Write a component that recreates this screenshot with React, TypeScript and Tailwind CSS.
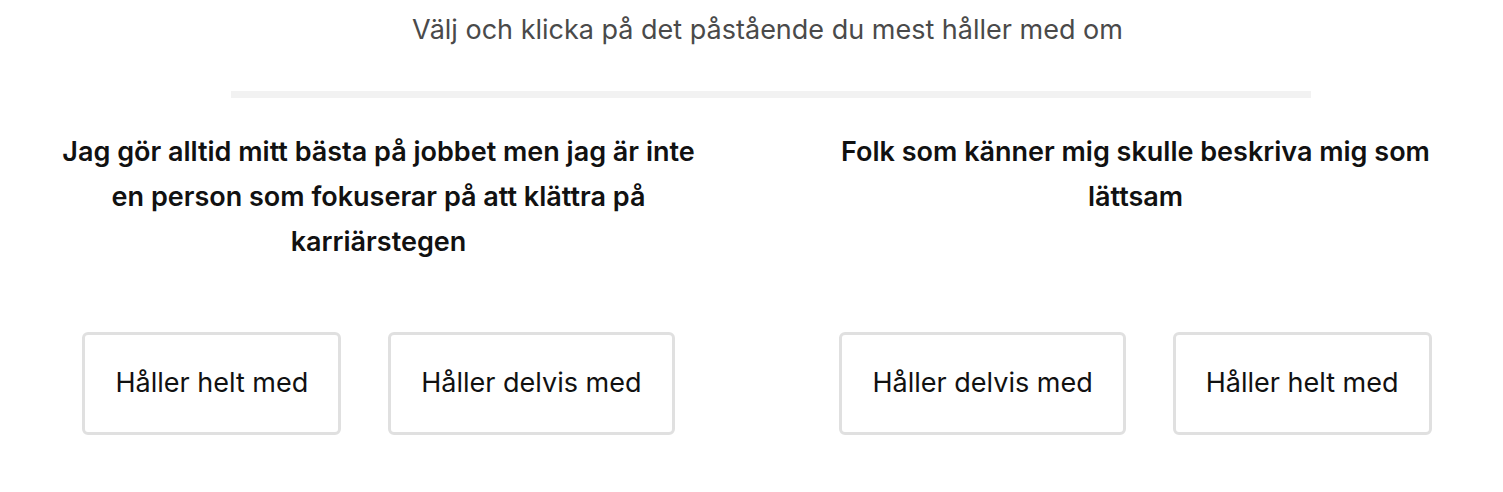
const questions = [
  {
    text: 'Jag gör alltid mitt bästa på jobbet men jag är inte en person som fokuserar på att klättra på karriärstegen',
    options: ['Håller helt med', 'Håller delvis med'],
  },
  {
    text: 'Folk som känner mig skulle beskriva mig som lättsam',
    options: ['Håller delvis med', 'Håller helt med'],
  },
];

export default function App() {
  return (
    <div className="w-[1503px] h-[492px] overflow-hidden bg-white font-['Inter',sans-serif]">
      <h2 className="pt-[12px] pl-[32px] text-center text-[27px] leading-[36px] text-[#4a4a4a]">
        Välj och klicka på det påstående du mest håller med om
      </h2>

      <div className="ml-[231px] mt-[43px] w-[1080px] h-[7px] bg-[#f2f2f2]" />

      <div className="flex mt-[31px]">
        {questions.map((q, i) => (
          <div key={i} className="w-[757px] shrink-0 flex flex-col items-center">
            <p className="h-[203px] max-w-[645px] text-center text-[27px] leading-[45px] font-semibold text-[#111111]">
              {q.text}
            </p>
            <div className="flex gap-[47px]">
              {q.options.map((opt) => (
                <button
                  key={opt}
                  className="h-[103px] px-[30px] border-[3px] border-[#e0e0e0] rounded-md bg-white text-[27px] text-[#111111]"
                >
                  {opt}
                </button>
              ))}
            </div>
          </div>
        ))}
      </div>
    </div>
  );
}
